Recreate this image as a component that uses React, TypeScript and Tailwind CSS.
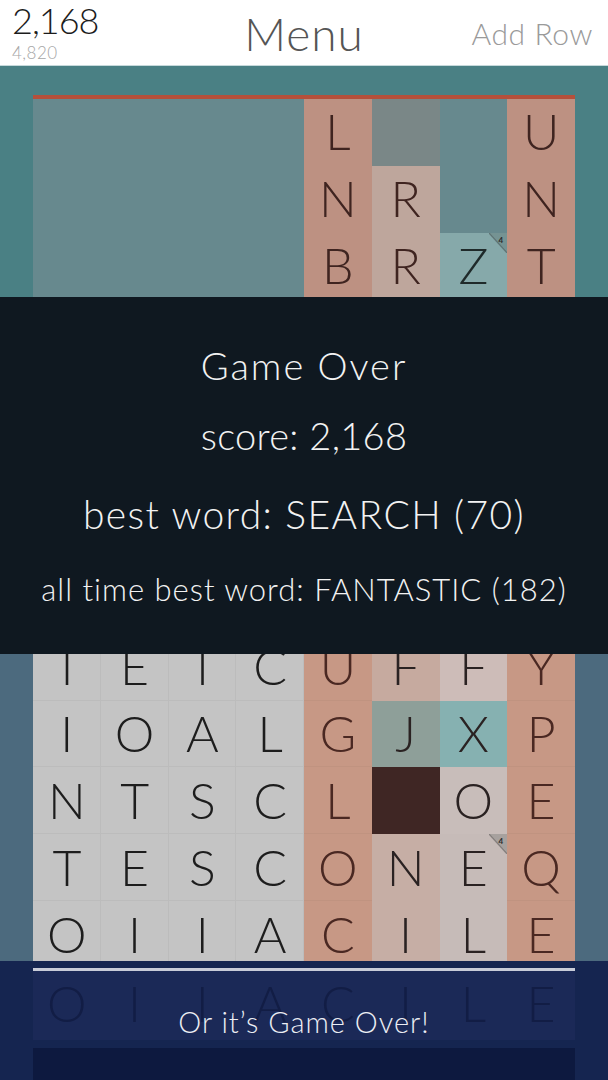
import React from 'react'

type Cell = { ch: string; bg: string; fg: string; badge?: boolean }

const EMPTY: Cell = { ch: '', bg: 'bg-[#67898e]', fg: '' }

const up = (ch: string, bg: string): Cell => ({ ch, bg, fg: 'text-[#3f2420]' })
const gray = (ch: string): Cell => ({ ch, bg: 'bg-[#c4c4c4] shadow-[inset_-1px_-1px_0_rgba(0,0,0,0.04)]', fg: 'text-[#1d1d1d]' })
const salmon = (ch: string): Cell => ({ ch, bg: 'bg-[#c79885] shadow-[inset_0_-1px_0_rgba(0,0,0,0.03)]', fg: 'text-[#4a2822]' })
const tile = (ch: string, bg: string, fg = 'text-[#2a2222]', badge = false): Cell => ({ ch, bg, fg, badge })

const rows: Cell[][] = [
  [EMPTY, EMPTY, EMPTY, EMPTY, up('L', 'bg-[#bd9182]'), up('', 'bg-[#7a8787]'), EMPTY, up('U', 'bg-[#bd9182]')],
  [EMPTY, EMPTY, EMPTY, EMPTY, up('N', 'bg-[#bd9182]'), up('R', 'bg-[#bea69c]'), EMPTY, up('N', 'bg-[#bd9182]')],
  [
    EMPTY, EMPTY, EMPTY, EMPTY,
    up('B', 'bg-[#bd9182]'),
    up('R', 'bg-[#bea69c]'),
    { ch: 'Z', bg: 'bg-[#86a9aa]', fg: 'text-[#1f2a2a]', badge: true },
    up('T', 'bg-[#bd9182]'),
  ],
  // rows 3-7 sit under the game over panel
  ...Array.from({ length: 5 }, () => [
    gray(''), gray(''), gray(''), gray(''), salmon(''),
    tile('', 'bg-[#c6aa9f]'), tile('', 'bg-[#cdbcb8]'), salmon(''),
  ]),
  [gray('T'), gray('E'), gray('T'), gray('C'), salmon('U'), tile('F', 'bg-[#c6aa9f]'), tile('F', 'bg-[#cdbcb8]'), salmon('Y')],
  [gray('I'), gray('O'), gray('A'), gray('L'), salmon('G'), tile('J', 'bg-[#8e9f99]'), tile('X', 'bg-[#86b1b1]'), salmon('P')],
  [gray('N'), gray('T'), gray('S'), gray('C'), salmon('L'), tile('', 'bg-[#3f2624]'), tile('O', 'bg-[#c8bdba]'), salmon('E')],
  [gray('T'), gray('E'), gray('S'), gray('C'), salmon('O'), tile('N', 'bg-[#c6aea5]'), tile('E', 'bg-[#c6bbb8]', 'text-[#2a2222]', true), salmon('Q')],
  [gray('O'), gray('I'), gray('I'), gray('A'), salmon('C'), tile('I', 'bg-[#c6aea5]'), tile('L', 'bg-[#c6bbb8]'), salmon('E')],
]

const preview = ['O', 'I', 'I', 'A', 'C', 'I', 'L', 'E']

function Tile({ cell }: { cell: Cell }) {
  return (
    <div className={`relative flex items-center justify-center ${cell.bg}`}>
      <span className={`text-[50px] leading-none font-light -mt-[2px] ${cell.fg}`}>{cell.ch}</span>
      {cell.badge && (
        <div className="absolute top-0 right-0 w-[18px] h-[20px]">
          <svg width="18" height="20" viewBox="0 0 18 20" className="absolute inset-0">
            <polygon points="0,0 18,0 18,20" fill="rgba(60,70,70,0.22)" />
            <line x1="0" y1="0" x2="18" y2="20" stroke="rgba(40,40,40,0.35)" strokeWidth="1.2" />
          </svg>
          <span className="absolute top-[3px] right-[4px] text-[8px] leading-none font-bold text-[#2a2a2a]">4</span>
        </div>
      )}
    </div>
  )
}

export default function App() {
  return (
    <div
      className="relative w-[608px] h-[1080px] overflow-hidden bg-[linear-gradient(to_bottom,#4a8084_297px,#4c6a7e_654px)]"
      style={{ fontFamily: 'Lato, "Open Sans", sans-serif' }}
    >
      {/* Header */}
      <header className="h-[66px] bg-white border-b border-[#c6d9db] grid grid-cols-[1fr_auto_1fr] items-start px-[12px]">
        <div className="flex flex-col">
          <span className="text-[36px] leading-none font-light tracking-[-1px] text-[#1c1c1c] mt-[2px]">2,168</span>
          <span className="text-[17px] leading-none font-light tracking-[0.5px] text-[#a6a6a6] mt-[6px]">4,820</span>
        </div>
        <span className="text-[46px] leading-none font-light tracking-[1px] text-[#555555] mt-[11px]">Menu</span>
        <span className="justify-self-end text-[30px] leading-none font-light tracking-[0.6px] text-[#9a9a9a] mt-[18px] mr-[3px]">
          Add Row
        </span>
      </header>

      {/* Board */}
      <div className="px-[33px] pt-[29px]">
        <div className="h-[4px] bg-[#b5503b]" />
        <div className="grid grid-cols-8 grid-rows-[repeat(13,minmax(0,1fr))] h-[869px] bg-[#67898e]">
          {rows.map((row, r) => row.map((cell, c) => <Tile key={`${r}-${c}`} cell={cell} />))}
        </div>
      </div>

      {/* Game over panel */}
      <div className="absolute inset-x-0 top-[297px] h-[357px] bg-[#0f1820] flex flex-col items-center text-[#f2f2f2] font-light">
        <p className="text-[38px] leading-none tracking-[2px] mt-[49px]">Game Over</p>
        <p className="text-[38px] leading-none tracking-[0.3px] mt-[32px]">score: 2,168</p>
        <p className="text-[39px] leading-none tracking-[1.4px] mt-[41px]">best word: SEARCH (70)</p>
        <p className="text-[31px] leading-none tracking-[1px] mt-[40px]">all time best word: FANTASTIC (182)</p>
      </div>

      {/* Tutorial banner */}
      <div className="absolute inset-x-0 top-[961px] bottom-0 bg-[#152550] px-[33px] flex flex-col">
        <div className="h-[3px] bg-[#c8ccd8] mt-[7px]" />
        <div className="grid h-[69px]">
          <div className="col-start-1 row-start-1 grid grid-cols-8 bg-[#1b2957]">
            {preview.map((ch, i) => (
              <div key={i} className="flex items-center justify-center">
                <span className="text-[50px] leading-none font-light text-[#121d45] -mt-[6px]">{ch}</span>
              </div>
            ))}
          </div>
          <p className="col-start-1 row-start-1 self-end mb-[4px] text-center text-[29px] leading-none font-light tracking-[1px] text-[#eceef4]">
            Or it’s Game Over!
          </p>
        </div>
        <div className="flex-1 mt-[8px] bg-[#0d193f]" />
      </div>
    </div>
  )
}
